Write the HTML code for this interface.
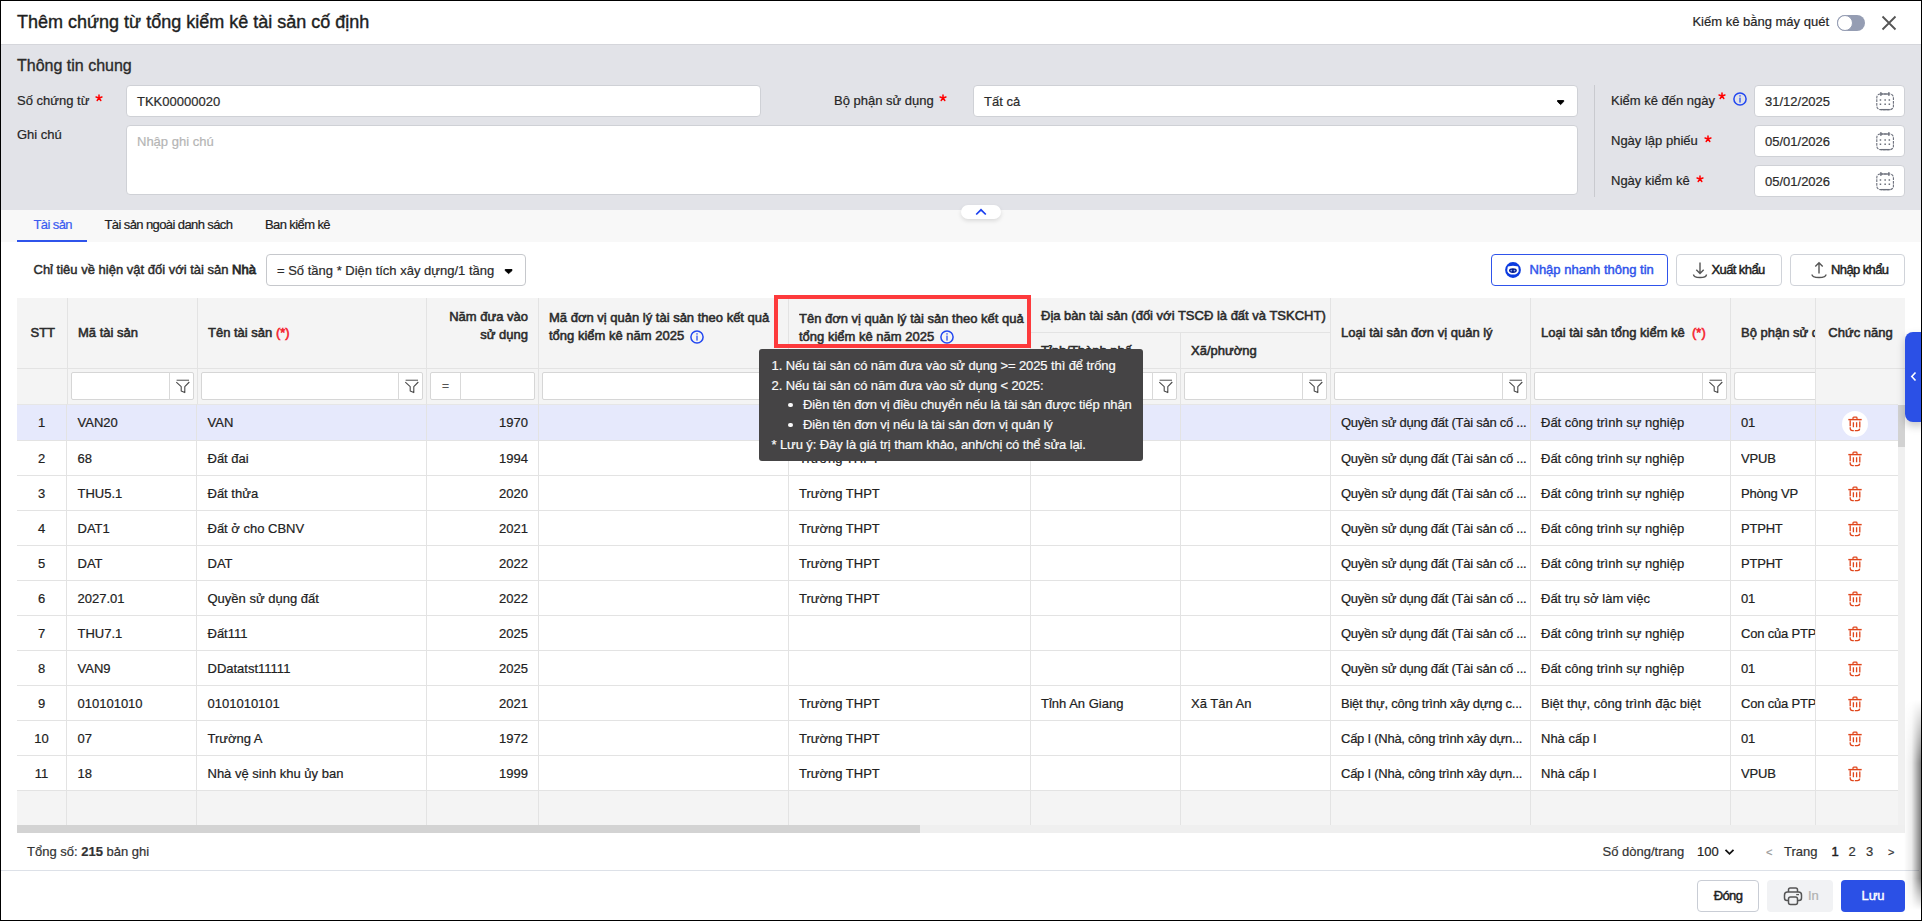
<!DOCTYPE html><html><head><meta charset="utf-8"><style>
html,body{margin:0;padding:0;}
body{width:1922px;height:921px;position:relative;overflow:hidden;background:#000;font-family:"Liberation Sans", sans-serif;}
</style></head><body>
<div style="position:absolute;left:1px;top:1px;width:1920px;height:919px;background:#fff"></div>
<div style="position:absolute;left:17px;top:11.46px;font-size:18px;line-height:22px;color:#1f1f1f;font-weight:400;white-space:nowrap;-webkit-text-stroke:0.4px #1f1f1f;">Thêm chứng từ tổng kiểm kê tài sản cố định</div>
<div style="position:absolute;right:93px;top:14.20px;font-size:13px;line-height:16px;color:#262626;font-weight:400;white-space:nowrap;-webkit-text-stroke:0.2px currentColor;">Kiếm kê bằng máy quét</div>
<div style="position:absolute;left:1837px;top:15px;width:28px;height:16px;background:#959db3;border-radius:8px"></div>
<div style="position:absolute;left:1837px;top:15px;width:16px;height:16px;background:#fff;border-radius:50%;box-sizing:border-box;border:1px solid #959db3"></div>
<svg style="position:absolute;left:1880px;top:14px" width="18" height="18" viewBox="0 0 18 18"><path d="M2.5 2.5 L15.5 15.5 M15.5 2.5 L2.5 15.5" stroke="#555" stroke-width="1.8" fill="none"/></svg>
<div style="position:absolute;left:1px;top:44px;width:1920px;height:1px;background:#d5d6db"></div>
<div style="position:absolute;left:1px;top:45px;width:1920px;height:165px;background:#e2e3e8"></div>
<div style="position:absolute;left:17px;top:56.16px;font-size:16px;line-height:20px;color:#2b2b2b;font-weight:400;white-space:nowrap;-webkit-text-stroke:0.35px #2b2b2b;">Thông tin chung</div>
<div style="position:absolute;left:17px;top:93.20px;font-size:13px;line-height:16px;color:#262626;font-weight:400;white-space:nowrap;-webkit-text-stroke:0.2px currentColor;">Số chứng từ</div>
<svg style="position:absolute;left:90.7px;top:90px" width="16" height="16" viewBox="0 0 16 16"><path d="M8 8 L8.00 4.90 M8 8 L10.95 7.04 M8 8 L9.82 10.51 M8 8 L6.18 10.51 M8 8 L5.05 7.04 " stroke="#ff0000" stroke-width="1.5" stroke-linecap="round" fill="none"/></svg>
<div style="position:absolute;left:126px;top:85px;width:635px;height:32px;background:#fff;box-sizing:border-box;border:1px solid #cfd1d6;border-radius:4px"></div>
<div style="position:absolute;left:137px;top:94.20px;font-size:13px;line-height:16px;color:#2b2b2b;font-weight:400;white-space:nowrap;-webkit-text-stroke:0.2px currentColor;">TKK00000020</div>
<div style="position:absolute;left:17px;top:127.20px;font-size:13px;line-height:16px;color:#262626;font-weight:400;white-space:nowrap;-webkit-text-stroke:0.2px currentColor;">Ghi chú</div>
<div style="position:absolute;left:126px;top:125px;width:1452px;height:70px;background:#fff;box-sizing:border-box;border:1px solid #cfd1d6;border-radius:4px"></div>
<div style="position:absolute;left:137px;top:134.20px;font-size:13px;line-height:16px;color:#b5b5b5;font-weight:400;white-space:nowrap;-webkit-text-stroke:0.2px currentColor;">Nhập ghi chú</div>
<div style="position:absolute;left:834px;top:93.20px;font-size:13px;line-height:16px;color:#262626;font-weight:400;white-space:nowrap;-webkit-text-stroke:0.2px currentColor;">Bộ phận sử dụng</div>
<svg style="position:absolute;left:935px;top:90px" width="16" height="16" viewBox="0 0 16 16"><path d="M8 8 L8.00 4.90 M8 8 L10.95 7.04 M8 8 L9.82 10.51 M8 8 L6.18 10.51 M8 8 L5.05 7.04 " stroke="#ff0000" stroke-width="1.5" stroke-linecap="round" fill="none"/></svg>
<div style="position:absolute;left:973px;top:85px;width:605px;height:32px;background:#fff;box-sizing:border-box;border:1px solid #cfd1d6;border-radius:4px"></div>
<div style="position:absolute;left:984px;top:94.20px;font-size:13px;line-height:16px;color:#2b2b2b;font-weight:400;white-space:nowrap;-webkit-text-stroke:0.2px currentColor;">Tất cả</div>
<svg style="position:absolute;left:1555px;top:99px" width="11" height="7" viewBox="0 0 11 7"><path d="M2.5 1.5 H8.7 V2.6 L5.6 5.6 L2.5 2.6 Z" fill="#000" stroke="#000" stroke-width="0.9" stroke-linejoin="round"/></svg>
<div style="position:absolute;left:1594px;top:85px;width:1px;height:112px;background:#c9cacf"></div>
<div style="position:absolute;left:1611px;top:93.20px;font-size:13px;line-height:16px;color:#262626;font-weight:400;white-space:nowrap;-webkit-text-stroke:0.2px currentColor;">Kiểm kê đến ngày</div>
<svg style="position:absolute;left:1713.5px;top:87.5px" width="16" height="16" viewBox="0 0 16 16"><path d="M8 8 L8.00 4.90 M8 8 L10.95 7.04 M8 8 L9.82 10.51 M8 8 L6.18 10.51 M8 8 L5.05 7.04 " stroke="#ff0000" stroke-width="1.5" stroke-linecap="round" fill="none"/></svg>
<svg style="position:absolute;left:1733px;top:92px" width="14" height="14" viewBox="0 0 14 14"><circle cx="7" cy="7" r="6.1" stroke="#2247f0" stroke-width="1.5" fill="none"/><rect x="6.3" y="5.6" width="1.4" height="5" fill="#3a5cf2"/><rect x="6.3" y="3.2" width="1.4" height="1.4" fill="#3a5cf2"/></svg>
<div style="position:absolute;left:1611px;top:133.20px;font-size:13px;line-height:16px;color:#262626;font-weight:400;white-space:nowrap;-webkit-text-stroke:0.2px currentColor;">Ngày lập phiếu</div>
<svg style="position:absolute;left:1700px;top:131px" width="16" height="16" viewBox="0 0 16 16"><path d="M8 8 L8.00 4.90 M8 8 L10.95 7.04 M8 8 L9.82 10.51 M8 8 L6.18 10.51 M8 8 L5.05 7.04 " stroke="#ff0000" stroke-width="1.5" stroke-linecap="round" fill="none"/></svg>
<div style="position:absolute;left:1611px;top:173.20px;font-size:13px;line-height:16px;color:#262626;font-weight:400;white-space:nowrap;-webkit-text-stroke:0.2px currentColor;">Ngày kiểm kê</div>
<svg style="position:absolute;left:1692px;top:171px" width="16" height="16" viewBox="0 0 16 16"><path d="M8 8 L8.00 4.90 M8 8 L10.95 7.04 M8 8 L9.82 10.51 M8 8 L6.18 10.51 M8 8 L5.05 7.04 " stroke="#ff0000" stroke-width="1.5" stroke-linecap="round" fill="none"/></svg>
<div style="position:absolute;left:1754px;top:85px;width:151px;height:32px;background:#fff;box-sizing:border-box;border:1px solid #cfd1d6;border-radius:4px"></div>
<div style="position:absolute;left:1765px;top:94.20px;font-size:13px;line-height:16px;color:#2b2b2b;font-weight:400;white-space:nowrap;-webkit-text-stroke:0.2px currentColor;">31/12/2025</div>
<svg style="position:absolute;left:1876px;top:91px" width="19" height="20" viewBox="0 0 19 20"><rect x="0.8" y="3" width="16.6" height="15.6" rx="3.4" stroke="#6b6f7b" stroke-width="1.1" fill="none" stroke-dasharray="2.8 0.9"/><path d="M4.9 1 V5 M12.9 1 V5" stroke="#6b6f7b" stroke-width="1.2"/><path d="M4.9 3 H12.9" stroke="#6b6f7b" stroke-width="1.2"/><path d="M3.7 9h1.5M8.4 9h1.5M12.6 9h1.5M3.7 13.2h1.5M8.4 13.2h1.5M12.6 13.2h1.5" stroke="#6b6f7b" stroke-width="1.4"/><path d="M5.2 18.6 H13.8" stroke="#6b6f7b" stroke-width="1.3"/></svg>
<div style="position:absolute;left:1754px;top:125px;width:151px;height:32px;background:#fff;box-sizing:border-box;border:1px solid #cfd1d6;border-radius:4px"></div>
<div style="position:absolute;left:1765px;top:134.20px;font-size:13px;line-height:16px;color:#2b2b2b;font-weight:400;white-space:nowrap;-webkit-text-stroke:0.2px currentColor;">05/01/2026</div>
<svg style="position:absolute;left:1876px;top:131px" width="19" height="20" viewBox="0 0 19 20"><rect x="0.8" y="3" width="16.6" height="15.6" rx="3.4" stroke="#6b6f7b" stroke-width="1.1" fill="none" stroke-dasharray="2.8 0.9"/><path d="M4.9 1 V5 M12.9 1 V5" stroke="#6b6f7b" stroke-width="1.2"/><path d="M4.9 3 H12.9" stroke="#6b6f7b" stroke-width="1.2"/><path d="M3.7 9h1.5M8.4 9h1.5M12.6 9h1.5M3.7 13.2h1.5M8.4 13.2h1.5M12.6 13.2h1.5" stroke="#6b6f7b" stroke-width="1.4"/><path d="M5.2 18.6 H13.8" stroke="#6b6f7b" stroke-width="1.3"/></svg>
<div style="position:absolute;left:1754px;top:165px;width:151px;height:32px;background:#fff;box-sizing:border-box;border:1px solid #cfd1d6;border-radius:4px"></div>
<div style="position:absolute;left:1765px;top:174.20px;font-size:13px;line-height:16px;color:#2b2b2b;font-weight:400;white-space:nowrap;-webkit-text-stroke:0.2px currentColor;">05/01/2026</div>
<svg style="position:absolute;left:1876px;top:171px" width="19" height="20" viewBox="0 0 19 20"><rect x="0.8" y="3" width="16.6" height="15.6" rx="3.4" stroke="#6b6f7b" stroke-width="1.1" fill="none" stroke-dasharray="2.8 0.9"/><path d="M4.9 1 V5 M12.9 1 V5" stroke="#6b6f7b" stroke-width="1.2"/><path d="M4.9 3 H12.9" stroke="#6b6f7b" stroke-width="1.2"/><path d="M3.7 9h1.5M8.4 9h1.5M12.6 9h1.5M3.7 13.2h1.5M8.4 13.2h1.5M12.6 13.2h1.5" stroke="#6b6f7b" stroke-width="1.4"/><path d="M5.2 18.6 H13.8" stroke="#6b6f7b" stroke-width="1.3"/></svg>
<div style="position:absolute;left:1px;top:210px;width:1920px;height:32px;background:#f8f8f8"></div>
<div style="position:absolute;left:33.5px;top:217.20px;font-size:13px;line-height:16px;color:#3a5cf0;font-weight:400;white-space:nowrap;-webkit-text-stroke:0.2px currentColor;letter-spacing:-0.6px;">Tài sản</div>
<div style="position:absolute;left:104.5px;top:217.20px;font-size:13px;line-height:16px;color:#212121;font-weight:400;white-space:nowrap;-webkit-text-stroke:0.2px currentColor;letter-spacing:-0.6px;">Tài sản ngoài danh sách</div>
<div style="position:absolute;left:265px;top:217.20px;font-size:13px;line-height:16px;color:#212121;font-weight:400;white-space:nowrap;-webkit-text-stroke:0.2px currentColor;letter-spacing:-0.6px;">Ban kiểm kê</div>
<div style="position:absolute;left:17px;top:240px;width:70px;height:2px;background:#2f54eb"></div>
<div style="position:absolute;left:961px;top:205px;width:40px;height:14px;background:#fff;border-radius:7px;box-shadow:0 2px 4px rgba(0,0,0,0.12)"></div>
<svg style="position:absolute;left:975px;top:208px" width="12" height="8" viewBox="0 0 12 8"><path d="M1.2 6.5 L6 1.8 L10.8 6.5" stroke="#1a3ff0" stroke-width="1.7" fill="none"/></svg>
<div style="position:absolute;left:33.5px;top:261.70px;font-size:13px;line-height:16px;color:#2b2b2b;font-weight:400;white-space:nowrap;-webkit-text-stroke:0.45px currentColor;">Chỉ tiêu về hiện vật đối với tài sản <span style="-webkit-text-stroke:0.8px #2b2b2b">Nhà</span></div>
<div style="position:absolute;left:266px;top:254px;width:260px;height:32px;background:#fff;box-sizing:border-box;border:1px solid #c6c8cc;border-radius:4px"></div>
<div style="position:absolute;left:277px;top:262.70px;font-size:13px;line-height:16px;color:#2b2b2b;font-weight:400;white-space:nowrap;-webkit-text-stroke:0.2px currentColor;">= Số tầng * Diện tích xây dựng/1 tầng</div>
<svg style="position:absolute;left:503px;top:268px" width="11" height="7" viewBox="0 0 11 7"><path d="M2.2 1.5 H9 V2.6 L5.6 5.6 L2.2 2.6 Z" fill="#000" stroke="#000" stroke-width="0.9" stroke-linejoin="round"/></svg>
<div style="position:absolute;left:1491px;top:254px;width:177px;height:32px;background:#fff;box-sizing:border-box;border:1.5px solid #2f54eb;border-radius:4px"></div>
<svg style="position:absolute;left:1504px;top:261px" width="18" height="18" viewBox="0 0 18 18"><circle cx="9" cy="9" r="7.9" fill="#0b3be0"/><path d="M3.6 7 Q3.2 5 5.2 5.2 Q9 4.5 12.8 5.2 Q14.8 5 14.4 7 Q15 9 14.6 10.5 Q13.5 13.6 9 13.6 Q4.5 13.6 3.4 10.5 Q3 9 3.6 7 Z" fill="#fff"/><ellipse cx="8.9" cy="9.6" rx="3.9" ry="2.4" fill="#001a8c"/><circle cx="7.3" cy="9.6" r="0.9" fill="#8ea2e6"/><circle cx="10.5" cy="9.6" r="0.9" fill="#8ea2e6"/></svg>
<div style="position:absolute;left:1529.5px;top:262.20px;font-size:13px;line-height:16px;color:#2f54eb;font-weight:400;white-space:nowrap;-webkit-text-stroke:0.45px currentColor;">Nhập nhanh thông tin</div>
<div style="position:absolute;left:1676px;top:254px;width:106px;height:32px;background:#fff;box-sizing:border-box;border:1px solid #d0d3d9;border-radius:4px"></div>
<svg style="position:absolute;left:1692px;top:261px" width="17" height="18" viewBox="0 0 17 18"><path d="M8 1.5 V12.5 M4.3 8.8 L8 12.5 L11.7 8.8" stroke="#555" stroke-width="1.4" fill="none"/><path d="M1.5 13.5 Q1.5 16.5 8 16.5 Q14.5 16.5 14.5 13.5" stroke="#555" stroke-width="1.4" fill="none"/></svg>
<div style="position:absolute;left:1711.5px;top:262.20px;font-size:13px;line-height:16px;color:#212121;font-weight:400;white-space:nowrap;-webkit-text-stroke:0.45px currentColor;letter-spacing:-0.6px;">Xuất khẩu</div>
<div style="position:absolute;left:1790px;top:254px;width:115px;height:32px;background:#fff;box-sizing:border-box;border:1px solid #d0d3d9;border-radius:4px"></div>
<svg style="position:absolute;left:1811px;top:261px" width="17" height="18" viewBox="0 0 17 18"><path d="M8 12.5 V1.8 M4.3 5.5 L8 1.8 L11.7 5.5" stroke="#555" stroke-width="1.4" fill="none"/><path d="M1 13.5 Q1 16.5 8 16.5 Q15 16.5 15 13.5" stroke="#555" stroke-width="1.4" fill="none"/></svg>
<div style="position:absolute;left:1831px;top:262.20px;font-size:13px;line-height:16px;color:#212121;font-weight:400;white-space:nowrap;-webkit-text-stroke:0.45px currentColor;letter-spacing:-0.6px;">Nhập khẩu</div>
<div style="position:absolute;left:17px;top:298px;width:1881px;height:527px;background:#f4f4f4"></div>
<div style="position:absolute;left:1898px;top:298px;width:7px;height:107px;background:#f4f4f4"></div>
<div style="position:absolute;left:17px;top:405px;width:1881px;height:35px;background:#e6e9fc"></div>
<div style="position:absolute;left:17px;top:440px;width:1881px;height:1px;background:#e3e3e3"></div>
<div style="position:absolute;left:17px;top:441px;width:1881px;height:34px;background:#fff"></div>
<div style="position:absolute;left:17px;top:475px;width:1881px;height:1px;background:#e3e3e3"></div>
<div style="position:absolute;left:17px;top:476px;width:1881px;height:34px;background:#fff"></div>
<div style="position:absolute;left:17px;top:510px;width:1881px;height:1px;background:#e3e3e3"></div>
<div style="position:absolute;left:17px;top:511px;width:1881px;height:34px;background:#fff"></div>
<div style="position:absolute;left:17px;top:545px;width:1881px;height:1px;background:#e3e3e3"></div>
<div style="position:absolute;left:17px;top:546px;width:1881px;height:34px;background:#fff"></div>
<div style="position:absolute;left:17px;top:580px;width:1881px;height:1px;background:#e3e3e3"></div>
<div style="position:absolute;left:17px;top:581px;width:1881px;height:34px;background:#fff"></div>
<div style="position:absolute;left:17px;top:615px;width:1881px;height:1px;background:#e3e3e3"></div>
<div style="position:absolute;left:17px;top:616px;width:1881px;height:34px;background:#fff"></div>
<div style="position:absolute;left:17px;top:650px;width:1881px;height:1px;background:#e3e3e3"></div>
<div style="position:absolute;left:17px;top:651px;width:1881px;height:34px;background:#fff"></div>
<div style="position:absolute;left:17px;top:685px;width:1881px;height:1px;background:#e3e3e3"></div>
<div style="position:absolute;left:17px;top:686px;width:1881px;height:34px;background:#fff"></div>
<div style="position:absolute;left:17px;top:720px;width:1881px;height:1px;background:#e3e3e3"></div>
<div style="position:absolute;left:17px;top:721px;width:1881px;height:34px;background:#fff"></div>
<div style="position:absolute;left:17px;top:755px;width:1881px;height:1px;background:#e3e3e3"></div>
<div style="position:absolute;left:17px;top:756px;width:1881px;height:34px;background:#fff"></div>
<div style="position:absolute;left:17px;top:790px;width:1881px;height:1px;background:#e3e3e3"></div>
<div style="position:absolute;left:17px;top:368px;width:1888px;height:1px;background:#e3e3e3"></div>
<div style="position:absolute;left:17px;top:404px;width:1881px;height:1px;background:#e6e6e6"></div>
<div style="position:absolute;left:1030px;top:332px;width:300px;height:1px;background:#e3e3e3"></div>
<div style="position:absolute;left:67px;top:298px;width:1px;height:106px;background:#e3e3e3"></div>
<div style="position:absolute;left:66px;top:404px;width:1px;height:421px;background:#e3e3e3"></div>
<div style="position:absolute;left:197px;top:298px;width:1px;height:106px;background:#e3e3e3"></div>
<div style="position:absolute;left:196px;top:404px;width:1px;height:421px;background:#e3e3e3"></div>
<div style="position:absolute;left:426px;top:298px;width:1px;height:527px;background:#e3e3e3"></div>
<div style="position:absolute;left:538px;top:298px;width:1px;height:527px;background:#e3e3e3"></div>
<div style="position:absolute;left:788px;top:298px;width:1px;height:527px;background:#e3e3e3"></div>
<div style="position:absolute;left:1030px;top:298px;width:1px;height:527px;background:#e3e3e3"></div>
<div style="position:absolute;left:1180px;top:333px;width:1px;height:492px;background:#e3e3e3"></div>
<div style="position:absolute;left:1330px;top:298px;width:1px;height:527px;background:#e3e3e3"></div>
<div style="position:absolute;left:1530px;top:298px;width:1px;height:527px;background:#e3e3e3"></div>
<div style="position:absolute;left:1730px;top:298px;width:1px;height:527px;background:#e3e3e3"></div>
<div style="position:absolute;left:1815px;top:298px;width:1px;height:527px;background:#e3e3e3"></div>
<div style="position:absolute;left:1898px;top:405px;width:7px;height:420px;background:#f0f0f0"></div>
<div style="position:absolute;left:1898px;top:405px;width:7px;height:42px;background:#d2d2d2"></div>
<div style="position:absolute;left:17px;top:825px;width:1888px;height:8px;background:#efefef"></div>
<div style="position:absolute;left:17px;top:825px;width:903px;height:8px;background:#d3d3d3"></div>
<div style="position:absolute;left:30.5px;top:325.20px;font-size:13px;line-height:16px;color:#2b2b2b;font-weight:400;white-space:nowrap;-webkit-text-stroke:0.55px currentColor;">STT</div>
<div style="position:absolute;left:78px;top:325.20px;font-size:13px;line-height:16px;color:#2b2b2b;font-weight:400;white-space:nowrap;-webkit-text-stroke:0.55px currentColor;">Mã tài sản</div>
<div style="position:absolute;left:208px;top:325.20px;font-size:13px;line-height:16px;color:#2b2b2b;font-weight:400;white-space:nowrap;-webkit-text-stroke:0.55px currentColor;">Tên tài sản <span style="color:#f5222d">(*)</span></div>
<div style="position:absolute;right:1394px;top:309.20px;font-size:13px;line-height:16px;color:#2b2b2b;font-weight:400;white-space:nowrap;-webkit-text-stroke:0.55px currentColor;">Năm đưa vào</div>
<div style="position:absolute;right:1394px;top:327.20px;font-size:13px;line-height:16px;color:#2b2b2b;font-weight:400;white-space:nowrap;-webkit-text-stroke:0.55px currentColor;">sử dụng</div>
<div style="position:absolute;left:549px;width:236px;overflow:hidden;top:310.20px;font-size:13px;line-height:16px;color:#2b2b2b;font-weight:400;white-space:nowrap;-webkit-text-stroke:0.55px currentColor;">Mã đơn vị quản lý tài sản theo kết quả</div>
<div style="position:absolute;left:549px;top:328.20px;font-size:13px;line-height:16px;color:#2b2b2b;font-weight:400;white-space:nowrap;-webkit-text-stroke:0.55px currentColor;">tổng kiểm kê năm 2025</div>
<svg style="position:absolute;left:690px;top:330px" width="14" height="14" viewBox="0 0 14 14"><circle cx="7" cy="7" r="6.1" stroke="#2247f0" stroke-width="1.5" fill="none"/><rect x="6.3" y="5.6" width="1.4" height="5" fill="#3a5cf2"/><rect x="6.3" y="3.2" width="1.4" height="1.4" fill="#3a5cf2"/></svg>
<div style="position:absolute;left:799px;width:228px;overflow:hidden;top:310.70px;font-size:13px;line-height:16px;color:#2b2b2b;font-weight:400;white-space:nowrap;-webkit-text-stroke:0.55px currentColor;">Tên đơn vị quản lý tài sản theo kết quả</div>
<div style="position:absolute;left:799px;top:328.70px;font-size:13px;line-height:16px;color:#2b2b2b;font-weight:400;white-space:nowrap;-webkit-text-stroke:0.55px currentColor;">tổng kiểm kê năm 2025</div>
<svg style="position:absolute;left:940px;top:330px" width="14" height="14" viewBox="0 0 14 14"><circle cx="7" cy="7" r="6.1" stroke="#2247f0" stroke-width="1.5" fill="none"/><rect x="6.3" y="5.6" width="1.4" height="5" fill="#3a5cf2"/><rect x="6.3" y="3.2" width="1.4" height="1.4" fill="#3a5cf2"/></svg>
<div style="position:absolute;left:1041px;top:307.70px;font-size:13px;line-height:16px;color:#2b2b2b;font-weight:400;white-space:nowrap;-webkit-text-stroke:0.55px currentColor;">Địa bàn tài sản (đối với TSCĐ là đất và TSKCHT)</div>
<div style="position:absolute;left:1041px;top:343.20px;font-size:13px;line-height:16px;color:#2b2b2b;font-weight:400;white-space:nowrap;-webkit-text-stroke:0.55px currentColor;">Tỉnh/Thành phố</div>
<div style="position:absolute;left:1191px;top:343.20px;font-size:13px;line-height:16px;color:#2b2b2b;font-weight:400;white-space:nowrap;-webkit-text-stroke:0.55px currentColor;">Xã/phường</div>
<div style="position:absolute;left:1341px;top:325.20px;font-size:13px;line-height:16px;color:#2b2b2b;font-weight:400;white-space:nowrap;-webkit-text-stroke:0.55px currentColor;">Loại tài sản đơn vị quản lý</div>
<div style="position:absolute;left:1541px;top:325.20px;font-size:13px;line-height:16px;color:#2b2b2b;font-weight:400;white-space:nowrap;-webkit-text-stroke:0.55px currentColor;">Loại tài sản tổng kiểm kê <span style="color:#f5222d">&nbsp;(*)</span></div>
<div style="position:absolute;left:1741px;width:74px;overflow:hidden;top:325.20px;font-size:13px;line-height:16px;color:#2b2b2b;font-weight:400;white-space:nowrap;-webkit-text-stroke:0.55px currentColor;">Bộ phận sử dụng</div>
<div style="position:absolute;left:1660.5px;width:400px;text-align:center;top:325.20px;font-size:13px;line-height:16px;color:#2b2b2b;font-weight:400;white-space:nowrap;-webkit-text-stroke:0.55px currentColor;">Chức năng</div>
<div style="position:absolute;left:71px;top:372px;width:123px;height:28px;background:#fff;box-sizing:border-box;border:1px solid #d6d6d6;border-radius:2px"></div>
<div style="position:absolute;left:169px;top:372px;width:1px;height:28px;background:#d9d9d9"></div>
<svg style="position:absolute;left:173.5px;top:378px" width="18" height="17" viewBox="0 0 18 17"><path d="M2.6 2.3 H15" stroke="#808080" stroke-width="1.4"/><path d="M2.3 4.2 L7.2 8.6 V13 L10.8 14.6 V8.6 L15.3 4" stroke="#4a4a4a" stroke-width="1.1" fill="none" stroke-linejoin="round"/></svg>
<div style="position:absolute;left:201px;top:372px;width:222px;height:28px;background:#fff;box-sizing:border-box;border:1px solid #d6d6d6;border-radius:2px"></div>
<div style="position:absolute;left:398px;top:372px;width:1px;height:28px;background:#d9d9d9"></div>
<svg style="position:absolute;left:402.5px;top:378px" width="18" height="17" viewBox="0 0 18 17"><path d="M2.6 2.3 H15" stroke="#808080" stroke-width="1.4"/><path d="M2.3 4.2 L7.2 8.6 V13 L10.8 14.6 V8.6 L15.3 4" stroke="#4a4a4a" stroke-width="1.1" fill="none" stroke-linejoin="round"/></svg>
<div style="position:absolute;left:430px;top:372px;width:105px;height:28px;background:#fff;box-sizing:border-box;border:1px solid #d6d6d6;border-radius:2px"></div>
<div style="position:absolute;left:460px;top:372px;width:1px;height:28px;background:#d9d9d9"></div>
<div style="position:absolute;left:245.5px;width:400px;text-align:center;top:379.04px;font-size:12px;line-height:15px;color:#555;font-weight:400;white-space:nowrap;-webkit-text-stroke:0.2px currentColor;">=</div>
<div style="position:absolute;left:542px;top:372px;width:243px;height:28px;background:#fff;box-sizing:border-box;border:1px solid #d6d6d6;border-radius:2px"></div>
<div style="position:absolute;left:760px;top:372px;width:1px;height:28px;background:#d9d9d9"></div>
<svg style="position:absolute;left:764.5px;top:378px" width="18" height="17" viewBox="0 0 18 17"><path d="M2.6 2.3 H15" stroke="#808080" stroke-width="1.4"/><path d="M2.3 4.2 L7.2 8.6 V13 L10.8 14.6 V8.6 L15.3 4" stroke="#4a4a4a" stroke-width="1.1" fill="none" stroke-linejoin="round"/></svg>
<div style="position:absolute;left:792px;top:372px;width:235px;height:28px;background:#fff;box-sizing:border-box;border:1px solid #d6d6d6;border-radius:2px"></div>
<div style="position:absolute;left:1002px;top:372px;width:1px;height:28px;background:#d9d9d9"></div>
<svg style="position:absolute;left:1006.5px;top:378px" width="18" height="17" viewBox="0 0 18 17"><path d="M2.6 2.3 H15" stroke="#808080" stroke-width="1.4"/><path d="M2.3 4.2 L7.2 8.6 V13 L10.8 14.6 V8.6 L15.3 4" stroke="#4a4a4a" stroke-width="1.1" fill="none" stroke-linejoin="round"/></svg>
<div style="position:absolute;left:1034px;top:372px;width:143px;height:28px;background:#fff;box-sizing:border-box;border:1px solid #d6d6d6;border-radius:2px"></div>
<div style="position:absolute;left:1152px;top:372px;width:1px;height:28px;background:#d9d9d9"></div>
<svg style="position:absolute;left:1156.5px;top:378px" width="18" height="17" viewBox="0 0 18 17"><path d="M2.6 2.3 H15" stroke="#808080" stroke-width="1.4"/><path d="M2.3 4.2 L7.2 8.6 V13 L10.8 14.6 V8.6 L15.3 4" stroke="#4a4a4a" stroke-width="1.1" fill="none" stroke-linejoin="round"/></svg>
<div style="position:absolute;left:1184px;top:372px;width:143px;height:28px;background:#fff;box-sizing:border-box;border:1px solid #d6d6d6;border-radius:2px"></div>
<div style="position:absolute;left:1302px;top:372px;width:1px;height:28px;background:#d9d9d9"></div>
<svg style="position:absolute;left:1306.5px;top:378px" width="18" height="17" viewBox="0 0 18 17"><path d="M2.6 2.3 H15" stroke="#808080" stroke-width="1.4"/><path d="M2.3 4.2 L7.2 8.6 V13 L10.8 14.6 V8.6 L15.3 4" stroke="#4a4a4a" stroke-width="1.1" fill="none" stroke-linejoin="round"/></svg>
<div style="position:absolute;left:1334px;top:372px;width:193px;height:28px;background:#fff;box-sizing:border-box;border:1px solid #d6d6d6;border-radius:2px"></div>
<div style="position:absolute;left:1502px;top:372px;width:1px;height:28px;background:#d9d9d9"></div>
<svg style="position:absolute;left:1506.5px;top:378px" width="18" height="17" viewBox="0 0 18 17"><path d="M2.6 2.3 H15" stroke="#808080" stroke-width="1.4"/><path d="M2.3 4.2 L7.2 8.6 V13 L10.8 14.6 V8.6 L15.3 4" stroke="#4a4a4a" stroke-width="1.1" fill="none" stroke-linejoin="round"/></svg>
<div style="position:absolute;left:1534px;top:372px;width:193px;height:28px;background:#fff;box-sizing:border-box;border:1px solid #d6d6d6;border-radius:2px"></div>
<div style="position:absolute;left:1702px;top:372px;width:1px;height:28px;background:#d9d9d9"></div>
<svg style="position:absolute;left:1706.5px;top:378px" width="18" height="17" viewBox="0 0 18 17"><path d="M2.6 2.3 H15" stroke="#808080" stroke-width="1.4"/><path d="M2.3 4.2 L7.2 8.6 V13 L10.8 14.6 V8.6 L15.3 4" stroke="#4a4a4a" stroke-width="1.1" fill="none" stroke-linejoin="round"/></svg>
<div style="position:absolute;left:1734px;top:372px;width:81px;height:28px;background:#fff;border:1px solid #d9d9d9;border-right:none;border-radius:3px 0 0 3px;box-sizing:border-box"></div>
<div style="position:absolute;left:-158.5px;width:400px;text-align:center;top:415.00px;font-size:13px;line-height:16px;color:#212121;font-weight:400;white-space:nowrap;-webkit-text-stroke:0.2px currentColor;">1</div>
<div style="position:absolute;left:77.5px;top:415.00px;font-size:13px;line-height:16px;color:#212121;font-weight:400;white-space:nowrap;-webkit-text-stroke:0.2px currentColor;">VAN20</div>
<div style="position:absolute;left:207.5px;top:415.00px;font-size:13px;line-height:16px;color:#212121;font-weight:400;white-space:nowrap;-webkit-text-stroke:0.2px currentColor;">VAN</div>
<div style="position:absolute;right:1394px;top:415.00px;font-size:13px;line-height:16px;color:#212121;font-weight:400;white-space:nowrap;-webkit-text-stroke:0.2px currentColor;">1970</div>
<div style="position:absolute;left:1341px;width:188px;overflow:hidden;top:415.00px;font-size:13px;line-height:16px;color:#212121;font-weight:400;white-space:nowrap;-webkit-text-stroke:0.2px currentColor;letter-spacing:-0.25px;">Quyền sử dụng đất (Tài sản cố ...</div>
<div style="position:absolute;left:1541px;top:415.00px;font-size:13px;line-height:16px;color:#212121;font-weight:400;white-space:nowrap;-webkit-text-stroke:0.2px currentColor;">Đất công trình sự nghiệp</div>
<div style="position:absolute;left:1741px;width:74px;overflow:hidden;top:415.00px;font-size:13px;line-height:16px;color:#212121;font-weight:400;white-space:nowrap;-webkit-text-stroke:0.2px currentColor;letter-spacing:-0.2px;">01</div>
<div style="position:absolute;left:1842px;top:410.79999999999995px;width:26px;height:26.0px;background:#fff;border-radius:50%"></div>
<svg style="position:absolute;left:1847px;top:414.79999999999995px" width="16" height="18" viewBox="0 0 16 18"><path d="M1.3 4.6 H14.7" stroke="#e0451b" stroke-width="1.4"/><path d="M6 3.9 V2.9 Q6 2.1 6.8 2.1 H9.2 Q10 2.1 10 2.9 V3.9" stroke="#e0451b" stroke-width="1.2" fill="none"/><path d="M3.2 5.2 V13.2 Q3.2 15.6 5.6 15.6 H10.4 Q12.8 15.6 12.8 13.2 V5.2" stroke="#e0451b" stroke-width="1.3" fill="none" stroke-dasharray="6 1"/><path d="M6.4 7.2 V12.2 M9.6 7.2 V12.2" stroke="#e0451b" stroke-width="1.3"/></svg>
<div style="position:absolute;left:-158.5px;width:400px;text-align:center;top:451.00px;font-size:13px;line-height:16px;color:#212121;font-weight:400;white-space:nowrap;-webkit-text-stroke:0.2px currentColor;">2</div>
<div style="position:absolute;left:77.5px;top:451.00px;font-size:13px;line-height:16px;color:#212121;font-weight:400;white-space:nowrap;-webkit-text-stroke:0.2px currentColor;">68</div>
<div style="position:absolute;left:207.5px;top:451.00px;font-size:13px;line-height:16px;color:#212121;font-weight:400;white-space:nowrap;-webkit-text-stroke:0.2px currentColor;">Đất đai</div>
<div style="position:absolute;right:1394px;top:451.00px;font-size:13px;line-height:16px;color:#212121;font-weight:400;white-space:nowrap;-webkit-text-stroke:0.2px currentColor;">1994</div>
<div style="position:absolute;left:799px;top:451.00px;font-size:13px;line-height:16px;color:#212121;font-weight:400;white-space:nowrap;-webkit-text-stroke:0.2px currentColor;">Trường THPT</div>
<div style="position:absolute;left:1341px;width:188px;overflow:hidden;top:451.00px;font-size:13px;line-height:16px;color:#212121;font-weight:400;white-space:nowrap;-webkit-text-stroke:0.2px currentColor;letter-spacing:-0.25px;">Quyền sử dụng đất (Tài sản cố ...</div>
<div style="position:absolute;left:1541px;top:451.00px;font-size:13px;line-height:16px;color:#212121;font-weight:400;white-space:nowrap;-webkit-text-stroke:0.2px currentColor;">Đất công trình sự nghiệp</div>
<div style="position:absolute;left:1741px;width:74px;overflow:hidden;top:451.00px;font-size:13px;line-height:16px;color:#212121;font-weight:400;white-space:nowrap;-webkit-text-stroke:0.2px currentColor;letter-spacing:-0.2px;">VPUB</div>
<svg style="position:absolute;left:1847px;top:450.4px" width="16" height="18" viewBox="0 0 16 18"><path d="M1.3 4.6 H14.7" stroke="#e0451b" stroke-width="1.4"/><path d="M6 3.9 V2.9 Q6 2.1 6.8 2.1 H9.2 Q10 2.1 10 2.9 V3.9" stroke="#e0451b" stroke-width="1.2" fill="none"/><path d="M3.2 5.2 V13.2 Q3.2 15.6 5.6 15.6 H10.4 Q12.8 15.6 12.8 13.2 V5.2" stroke="#e0451b" stroke-width="1.3" fill="none" stroke-dasharray="6 1"/><path d="M6.4 7.2 V12.2 M9.6 7.2 V12.2" stroke="#e0451b" stroke-width="1.3"/></svg>
<div style="position:absolute;left:-158.5px;width:400px;text-align:center;top:486.00px;font-size:13px;line-height:16px;color:#212121;font-weight:400;white-space:nowrap;-webkit-text-stroke:0.2px currentColor;">3</div>
<div style="position:absolute;left:77.5px;top:486.00px;font-size:13px;line-height:16px;color:#212121;font-weight:400;white-space:nowrap;-webkit-text-stroke:0.2px currentColor;">THU5.1</div>
<div style="position:absolute;left:207.5px;top:486.00px;font-size:13px;line-height:16px;color:#212121;font-weight:400;white-space:nowrap;-webkit-text-stroke:0.2px currentColor;">Đất thửa</div>
<div style="position:absolute;right:1394px;top:486.00px;font-size:13px;line-height:16px;color:#212121;font-weight:400;white-space:nowrap;-webkit-text-stroke:0.2px currentColor;">2020</div>
<div style="position:absolute;left:799px;top:486.00px;font-size:13px;line-height:16px;color:#212121;font-weight:400;white-space:nowrap;-webkit-text-stroke:0.2px currentColor;">Trường THPT</div>
<div style="position:absolute;left:1341px;width:188px;overflow:hidden;top:486.00px;font-size:13px;line-height:16px;color:#212121;font-weight:400;white-space:nowrap;-webkit-text-stroke:0.2px currentColor;letter-spacing:-0.25px;">Quyền sử dụng đất (Tài sản cố ...</div>
<div style="position:absolute;left:1541px;top:486.00px;font-size:13px;line-height:16px;color:#212121;font-weight:400;white-space:nowrap;-webkit-text-stroke:0.2px currentColor;">Đất công trình sự nghiệp</div>
<div style="position:absolute;left:1741px;width:74px;overflow:hidden;top:486.00px;font-size:13px;line-height:16px;color:#212121;font-weight:400;white-space:nowrap;-webkit-text-stroke:0.2px currentColor;letter-spacing:-0.2px;">Phòng VP</div>
<svg style="position:absolute;left:1847px;top:485.4px" width="16" height="18" viewBox="0 0 16 18"><path d="M1.3 4.6 H14.7" stroke="#e0451b" stroke-width="1.4"/><path d="M6 3.9 V2.9 Q6 2.1 6.8 2.1 H9.2 Q10 2.1 10 2.9 V3.9" stroke="#e0451b" stroke-width="1.2" fill="none"/><path d="M3.2 5.2 V13.2 Q3.2 15.6 5.6 15.6 H10.4 Q12.8 15.6 12.8 13.2 V5.2" stroke="#e0451b" stroke-width="1.3" fill="none" stroke-dasharray="6 1"/><path d="M6.4 7.2 V12.2 M9.6 7.2 V12.2" stroke="#e0451b" stroke-width="1.3"/></svg>
<div style="position:absolute;left:-158.5px;width:400px;text-align:center;top:521.00px;font-size:13px;line-height:16px;color:#212121;font-weight:400;white-space:nowrap;-webkit-text-stroke:0.2px currentColor;">4</div>
<div style="position:absolute;left:77.5px;top:521.00px;font-size:13px;line-height:16px;color:#212121;font-weight:400;white-space:nowrap;-webkit-text-stroke:0.2px currentColor;">DAT1</div>
<div style="position:absolute;left:207.5px;top:521.00px;font-size:13px;line-height:16px;color:#212121;font-weight:400;white-space:nowrap;-webkit-text-stroke:0.2px currentColor;">Đất ở cho CBNV</div>
<div style="position:absolute;right:1394px;top:521.00px;font-size:13px;line-height:16px;color:#212121;font-weight:400;white-space:nowrap;-webkit-text-stroke:0.2px currentColor;">2021</div>
<div style="position:absolute;left:799px;top:521.00px;font-size:13px;line-height:16px;color:#212121;font-weight:400;white-space:nowrap;-webkit-text-stroke:0.2px currentColor;">Trường THPT</div>
<div style="position:absolute;left:1341px;width:188px;overflow:hidden;top:521.00px;font-size:13px;line-height:16px;color:#212121;font-weight:400;white-space:nowrap;-webkit-text-stroke:0.2px currentColor;letter-spacing:-0.25px;">Quyền sử dụng đất (Tài sản cố ...</div>
<div style="position:absolute;left:1541px;top:521.00px;font-size:13px;line-height:16px;color:#212121;font-weight:400;white-space:nowrap;-webkit-text-stroke:0.2px currentColor;">Đất công trình sự nghiệp</div>
<div style="position:absolute;left:1741px;width:74px;overflow:hidden;top:521.00px;font-size:13px;line-height:16px;color:#212121;font-weight:400;white-space:nowrap;-webkit-text-stroke:0.2px currentColor;letter-spacing:-0.2px;">PTPHT</div>
<svg style="position:absolute;left:1847px;top:520.4px" width="16" height="18" viewBox="0 0 16 18"><path d="M1.3 4.6 H14.7" stroke="#e0451b" stroke-width="1.4"/><path d="M6 3.9 V2.9 Q6 2.1 6.8 2.1 H9.2 Q10 2.1 10 2.9 V3.9" stroke="#e0451b" stroke-width="1.2" fill="none"/><path d="M3.2 5.2 V13.2 Q3.2 15.6 5.6 15.6 H10.4 Q12.8 15.6 12.8 13.2 V5.2" stroke="#e0451b" stroke-width="1.3" fill="none" stroke-dasharray="6 1"/><path d="M6.4 7.2 V12.2 M9.6 7.2 V12.2" stroke="#e0451b" stroke-width="1.3"/></svg>
<div style="position:absolute;left:-158.5px;width:400px;text-align:center;top:556.00px;font-size:13px;line-height:16px;color:#212121;font-weight:400;white-space:nowrap;-webkit-text-stroke:0.2px currentColor;">5</div>
<div style="position:absolute;left:77.5px;top:556.00px;font-size:13px;line-height:16px;color:#212121;font-weight:400;white-space:nowrap;-webkit-text-stroke:0.2px currentColor;">DAT</div>
<div style="position:absolute;left:207.5px;top:556.00px;font-size:13px;line-height:16px;color:#212121;font-weight:400;white-space:nowrap;-webkit-text-stroke:0.2px currentColor;">DAT</div>
<div style="position:absolute;right:1394px;top:556.00px;font-size:13px;line-height:16px;color:#212121;font-weight:400;white-space:nowrap;-webkit-text-stroke:0.2px currentColor;">2022</div>
<div style="position:absolute;left:799px;top:556.00px;font-size:13px;line-height:16px;color:#212121;font-weight:400;white-space:nowrap;-webkit-text-stroke:0.2px currentColor;">Trường THPT</div>
<div style="position:absolute;left:1341px;width:188px;overflow:hidden;top:556.00px;font-size:13px;line-height:16px;color:#212121;font-weight:400;white-space:nowrap;-webkit-text-stroke:0.2px currentColor;letter-spacing:-0.25px;">Quyền sử dụng đất (Tài sản cố ...</div>
<div style="position:absolute;left:1541px;top:556.00px;font-size:13px;line-height:16px;color:#212121;font-weight:400;white-space:nowrap;-webkit-text-stroke:0.2px currentColor;">Đất công trình sự nghiệp</div>
<div style="position:absolute;left:1741px;width:74px;overflow:hidden;top:556.00px;font-size:13px;line-height:16px;color:#212121;font-weight:400;white-space:nowrap;-webkit-text-stroke:0.2px currentColor;letter-spacing:-0.2px;">PTPHT</div>
<svg style="position:absolute;left:1847px;top:555.4px" width="16" height="18" viewBox="0 0 16 18"><path d="M1.3 4.6 H14.7" stroke="#e0451b" stroke-width="1.4"/><path d="M6 3.9 V2.9 Q6 2.1 6.8 2.1 H9.2 Q10 2.1 10 2.9 V3.9" stroke="#e0451b" stroke-width="1.2" fill="none"/><path d="M3.2 5.2 V13.2 Q3.2 15.6 5.6 15.6 H10.4 Q12.8 15.6 12.8 13.2 V5.2" stroke="#e0451b" stroke-width="1.3" fill="none" stroke-dasharray="6 1"/><path d="M6.4 7.2 V12.2 M9.6 7.2 V12.2" stroke="#e0451b" stroke-width="1.3"/></svg>
<div style="position:absolute;left:-158.5px;width:400px;text-align:center;top:591.00px;font-size:13px;line-height:16px;color:#212121;font-weight:400;white-space:nowrap;-webkit-text-stroke:0.2px currentColor;">6</div>
<div style="position:absolute;left:77.5px;top:591.00px;font-size:13px;line-height:16px;color:#212121;font-weight:400;white-space:nowrap;-webkit-text-stroke:0.2px currentColor;">2027.01</div>
<div style="position:absolute;left:207.5px;top:591.00px;font-size:13px;line-height:16px;color:#212121;font-weight:400;white-space:nowrap;-webkit-text-stroke:0.2px currentColor;">Quyền sử dụng đất</div>
<div style="position:absolute;right:1394px;top:591.00px;font-size:13px;line-height:16px;color:#212121;font-weight:400;white-space:nowrap;-webkit-text-stroke:0.2px currentColor;">2022</div>
<div style="position:absolute;left:799px;top:591.00px;font-size:13px;line-height:16px;color:#212121;font-weight:400;white-space:nowrap;-webkit-text-stroke:0.2px currentColor;">Trường THPT</div>
<div style="position:absolute;left:1341px;width:188px;overflow:hidden;top:591.00px;font-size:13px;line-height:16px;color:#212121;font-weight:400;white-space:nowrap;-webkit-text-stroke:0.2px currentColor;letter-spacing:-0.25px;">Quyền sử dụng đất (Tài sản cố ...</div>
<div style="position:absolute;left:1541px;top:591.00px;font-size:13px;line-height:16px;color:#212121;font-weight:400;white-space:nowrap;-webkit-text-stroke:0.2px currentColor;">Đất trụ sở làm việc</div>
<div style="position:absolute;left:1741px;width:74px;overflow:hidden;top:591.00px;font-size:13px;line-height:16px;color:#212121;font-weight:400;white-space:nowrap;-webkit-text-stroke:0.2px currentColor;letter-spacing:-0.2px;">01</div>
<svg style="position:absolute;left:1847px;top:590.4px" width="16" height="18" viewBox="0 0 16 18"><path d="M1.3 4.6 H14.7" stroke="#e0451b" stroke-width="1.4"/><path d="M6 3.9 V2.9 Q6 2.1 6.8 2.1 H9.2 Q10 2.1 10 2.9 V3.9" stroke="#e0451b" stroke-width="1.2" fill="none"/><path d="M3.2 5.2 V13.2 Q3.2 15.6 5.6 15.6 H10.4 Q12.8 15.6 12.8 13.2 V5.2" stroke="#e0451b" stroke-width="1.3" fill="none" stroke-dasharray="6 1"/><path d="M6.4 7.2 V12.2 M9.6 7.2 V12.2" stroke="#e0451b" stroke-width="1.3"/></svg>
<div style="position:absolute;left:-158.5px;width:400px;text-align:center;top:626.00px;font-size:13px;line-height:16px;color:#212121;font-weight:400;white-space:nowrap;-webkit-text-stroke:0.2px currentColor;">7</div>
<div style="position:absolute;left:77.5px;top:626.00px;font-size:13px;line-height:16px;color:#212121;font-weight:400;white-space:nowrap;-webkit-text-stroke:0.2px currentColor;">THU7.1</div>
<div style="position:absolute;left:207.5px;top:626.00px;font-size:13px;line-height:16px;color:#212121;font-weight:400;white-space:nowrap;-webkit-text-stroke:0.2px currentColor;">Đất111</div>
<div style="position:absolute;right:1394px;top:626.00px;font-size:13px;line-height:16px;color:#212121;font-weight:400;white-space:nowrap;-webkit-text-stroke:0.2px currentColor;">2025</div>
<div style="position:absolute;left:1341px;width:188px;overflow:hidden;top:626.00px;font-size:13px;line-height:16px;color:#212121;font-weight:400;white-space:nowrap;-webkit-text-stroke:0.2px currentColor;letter-spacing:-0.25px;">Quyền sử dụng đất (Tài sản cố ...</div>
<div style="position:absolute;left:1541px;top:626.00px;font-size:13px;line-height:16px;color:#212121;font-weight:400;white-space:nowrap;-webkit-text-stroke:0.2px currentColor;">Đất công trình sự nghiệp</div>
<div style="position:absolute;left:1741px;width:74px;overflow:hidden;top:626.00px;font-size:13px;line-height:16px;color:#212121;font-weight:400;white-space:nowrap;-webkit-text-stroke:0.2px currentColor;letter-spacing:-0.2px;">Con của PTPHT</div>
<svg style="position:absolute;left:1847px;top:625.4px" width="16" height="18" viewBox="0 0 16 18"><path d="M1.3 4.6 H14.7" stroke="#e0451b" stroke-width="1.4"/><path d="M6 3.9 V2.9 Q6 2.1 6.8 2.1 H9.2 Q10 2.1 10 2.9 V3.9" stroke="#e0451b" stroke-width="1.2" fill="none"/><path d="M3.2 5.2 V13.2 Q3.2 15.6 5.6 15.6 H10.4 Q12.8 15.6 12.8 13.2 V5.2" stroke="#e0451b" stroke-width="1.3" fill="none" stroke-dasharray="6 1"/><path d="M6.4 7.2 V12.2 M9.6 7.2 V12.2" stroke="#e0451b" stroke-width="1.3"/></svg>
<div style="position:absolute;left:-158.5px;width:400px;text-align:center;top:661.00px;font-size:13px;line-height:16px;color:#212121;font-weight:400;white-space:nowrap;-webkit-text-stroke:0.2px currentColor;">8</div>
<div style="position:absolute;left:77.5px;top:661.00px;font-size:13px;line-height:16px;color:#212121;font-weight:400;white-space:nowrap;-webkit-text-stroke:0.2px currentColor;">VAN9</div>
<div style="position:absolute;left:207.5px;top:661.00px;font-size:13px;line-height:16px;color:#212121;font-weight:400;white-space:nowrap;-webkit-text-stroke:0.2px currentColor;">DDatatst11111</div>
<div style="position:absolute;right:1394px;top:661.00px;font-size:13px;line-height:16px;color:#212121;font-weight:400;white-space:nowrap;-webkit-text-stroke:0.2px currentColor;">2025</div>
<div style="position:absolute;left:1341px;width:188px;overflow:hidden;top:661.00px;font-size:13px;line-height:16px;color:#212121;font-weight:400;white-space:nowrap;-webkit-text-stroke:0.2px currentColor;letter-spacing:-0.25px;">Quyền sử dụng đất (Tài sản cố ...</div>
<div style="position:absolute;left:1541px;top:661.00px;font-size:13px;line-height:16px;color:#212121;font-weight:400;white-space:nowrap;-webkit-text-stroke:0.2px currentColor;">Đất công trình sự nghiệp</div>
<div style="position:absolute;left:1741px;width:74px;overflow:hidden;top:661.00px;font-size:13px;line-height:16px;color:#212121;font-weight:400;white-space:nowrap;-webkit-text-stroke:0.2px currentColor;letter-spacing:-0.2px;">01</div>
<svg style="position:absolute;left:1847px;top:660.4px" width="16" height="18" viewBox="0 0 16 18"><path d="M1.3 4.6 H14.7" stroke="#e0451b" stroke-width="1.4"/><path d="M6 3.9 V2.9 Q6 2.1 6.8 2.1 H9.2 Q10 2.1 10 2.9 V3.9" stroke="#e0451b" stroke-width="1.2" fill="none"/><path d="M3.2 5.2 V13.2 Q3.2 15.6 5.6 15.6 H10.4 Q12.8 15.6 12.8 13.2 V5.2" stroke="#e0451b" stroke-width="1.3" fill="none" stroke-dasharray="6 1"/><path d="M6.4 7.2 V12.2 M9.6 7.2 V12.2" stroke="#e0451b" stroke-width="1.3"/></svg>
<div style="position:absolute;left:-158.5px;width:400px;text-align:center;top:696.00px;font-size:13px;line-height:16px;color:#212121;font-weight:400;white-space:nowrap;-webkit-text-stroke:0.2px currentColor;">9</div>
<div style="position:absolute;left:77.5px;top:696.00px;font-size:13px;line-height:16px;color:#212121;font-weight:400;white-space:nowrap;-webkit-text-stroke:0.2px currentColor;">010101010</div>
<div style="position:absolute;left:207.5px;top:696.00px;font-size:13px;line-height:16px;color:#212121;font-weight:400;white-space:nowrap;-webkit-text-stroke:0.2px currentColor;">0101010101</div>
<div style="position:absolute;right:1394px;top:696.00px;font-size:13px;line-height:16px;color:#212121;font-weight:400;white-space:nowrap;-webkit-text-stroke:0.2px currentColor;">2021</div>
<div style="position:absolute;left:799px;top:696.00px;font-size:13px;line-height:16px;color:#212121;font-weight:400;white-space:nowrap;-webkit-text-stroke:0.2px currentColor;">Trường THPT</div>
<div style="position:absolute;left:1041px;top:696.00px;font-size:13px;line-height:16px;color:#212121;font-weight:400;white-space:nowrap;-webkit-text-stroke:0.2px currentColor;">Tỉnh An Giang</div>
<div style="position:absolute;left:1191px;top:696.00px;font-size:13px;line-height:16px;color:#212121;font-weight:400;white-space:nowrap;-webkit-text-stroke:0.2px currentColor;">Xã Tân An</div>
<div style="position:absolute;left:1341px;width:188px;overflow:hidden;top:696.00px;font-size:13px;line-height:16px;color:#212121;font-weight:400;white-space:nowrap;-webkit-text-stroke:0.2px currentColor;letter-spacing:-0.25px;">Biệt thự, công trình xây dựng c...</div>
<div style="position:absolute;left:1541px;top:696.00px;font-size:13px;line-height:16px;color:#212121;font-weight:400;white-space:nowrap;-webkit-text-stroke:0.2px currentColor;">Biệt thự, công trình đặc biệt</div>
<div style="position:absolute;left:1741px;width:74px;overflow:hidden;top:696.00px;font-size:13px;line-height:16px;color:#212121;font-weight:400;white-space:nowrap;-webkit-text-stroke:0.2px currentColor;letter-spacing:-0.2px;">Con của PTPHT</div>
<svg style="position:absolute;left:1847px;top:695.4px" width="16" height="18" viewBox="0 0 16 18"><path d="M1.3 4.6 H14.7" stroke="#e0451b" stroke-width="1.4"/><path d="M6 3.9 V2.9 Q6 2.1 6.8 2.1 H9.2 Q10 2.1 10 2.9 V3.9" stroke="#e0451b" stroke-width="1.2" fill="none"/><path d="M3.2 5.2 V13.2 Q3.2 15.6 5.6 15.6 H10.4 Q12.8 15.6 12.8 13.2 V5.2" stroke="#e0451b" stroke-width="1.3" fill="none" stroke-dasharray="6 1"/><path d="M6.4 7.2 V12.2 M9.6 7.2 V12.2" stroke="#e0451b" stroke-width="1.3"/></svg>
<div style="position:absolute;left:-158.5px;width:400px;text-align:center;top:731.00px;font-size:13px;line-height:16px;color:#212121;font-weight:400;white-space:nowrap;-webkit-text-stroke:0.2px currentColor;">10</div>
<div style="position:absolute;left:77.5px;top:731.00px;font-size:13px;line-height:16px;color:#212121;font-weight:400;white-space:nowrap;-webkit-text-stroke:0.2px currentColor;">07</div>
<div style="position:absolute;left:207.5px;top:731.00px;font-size:13px;line-height:16px;color:#212121;font-weight:400;white-space:nowrap;-webkit-text-stroke:0.2px currentColor;">Trường A</div>
<div style="position:absolute;right:1394px;top:731.00px;font-size:13px;line-height:16px;color:#212121;font-weight:400;white-space:nowrap;-webkit-text-stroke:0.2px currentColor;">1972</div>
<div style="position:absolute;left:799px;top:731.00px;font-size:13px;line-height:16px;color:#212121;font-weight:400;white-space:nowrap;-webkit-text-stroke:0.2px currentColor;">Trường THPT</div>
<div style="position:absolute;left:1341px;width:188px;overflow:hidden;top:731.00px;font-size:13px;line-height:16px;color:#212121;font-weight:400;white-space:nowrap;-webkit-text-stroke:0.2px currentColor;letter-spacing:-0.25px;">Cấp I (Nhà, công trình xây dựn...</div>
<div style="position:absolute;left:1541px;top:731.00px;font-size:13px;line-height:16px;color:#212121;font-weight:400;white-space:nowrap;-webkit-text-stroke:0.2px currentColor;">Nhà cấp I</div>
<div style="position:absolute;left:1741px;width:74px;overflow:hidden;top:731.00px;font-size:13px;line-height:16px;color:#212121;font-weight:400;white-space:nowrap;-webkit-text-stroke:0.2px currentColor;letter-spacing:-0.2px;">01</div>
<svg style="position:absolute;left:1847px;top:730.4px" width="16" height="18" viewBox="0 0 16 18"><path d="M1.3 4.6 H14.7" stroke="#e0451b" stroke-width="1.4"/><path d="M6 3.9 V2.9 Q6 2.1 6.8 2.1 H9.2 Q10 2.1 10 2.9 V3.9" stroke="#e0451b" stroke-width="1.2" fill="none"/><path d="M3.2 5.2 V13.2 Q3.2 15.6 5.6 15.6 H10.4 Q12.8 15.6 12.8 13.2 V5.2" stroke="#e0451b" stroke-width="1.3" fill="none" stroke-dasharray="6 1"/><path d="M6.4 7.2 V12.2 M9.6 7.2 V12.2" stroke="#e0451b" stroke-width="1.3"/></svg>
<div style="position:absolute;left:-158.5px;width:400px;text-align:center;top:766.00px;font-size:13px;line-height:16px;color:#212121;font-weight:400;white-space:nowrap;-webkit-text-stroke:0.2px currentColor;">11</div>
<div style="position:absolute;left:77.5px;top:766.00px;font-size:13px;line-height:16px;color:#212121;font-weight:400;white-space:nowrap;-webkit-text-stroke:0.2px currentColor;">18</div>
<div style="position:absolute;left:207.5px;top:766.00px;font-size:13px;line-height:16px;color:#212121;font-weight:400;white-space:nowrap;-webkit-text-stroke:0.2px currentColor;">Nhà vệ sinh khu ủy ban</div>
<div style="position:absolute;right:1394px;top:766.00px;font-size:13px;line-height:16px;color:#212121;font-weight:400;white-space:nowrap;-webkit-text-stroke:0.2px currentColor;">1999</div>
<div style="position:absolute;left:799px;top:766.00px;font-size:13px;line-height:16px;color:#212121;font-weight:400;white-space:nowrap;-webkit-text-stroke:0.2px currentColor;">Trường THPT</div>
<div style="position:absolute;left:1341px;width:188px;overflow:hidden;top:766.00px;font-size:13px;line-height:16px;color:#212121;font-weight:400;white-space:nowrap;-webkit-text-stroke:0.2px currentColor;letter-spacing:-0.25px;">Cấp I (Nhà, công trình xây dựn...</div>
<div style="position:absolute;left:1541px;top:766.00px;font-size:13px;line-height:16px;color:#212121;font-weight:400;white-space:nowrap;-webkit-text-stroke:0.2px currentColor;">Nhà cấp I</div>
<div style="position:absolute;left:1741px;width:74px;overflow:hidden;top:766.00px;font-size:13px;line-height:16px;color:#212121;font-weight:400;white-space:nowrap;-webkit-text-stroke:0.2px currentColor;letter-spacing:-0.2px;">VPUB</div>
<svg style="position:absolute;left:1847px;top:765.4px" width="16" height="18" viewBox="0 0 16 18"><path d="M1.3 4.6 H14.7" stroke="#e0451b" stroke-width="1.4"/><path d="M6 3.9 V2.9 Q6 2.1 6.8 2.1 H9.2 Q10 2.1 10 2.9 V3.9" stroke="#e0451b" stroke-width="1.2" fill="none"/><path d="M3.2 5.2 V13.2 Q3.2 15.6 5.6 15.6 H10.4 Q12.8 15.6 12.8 13.2 V5.2" stroke="#e0451b" stroke-width="1.3" fill="none" stroke-dasharray="6 1"/><path d="M6.4 7.2 V12.2 M9.6 7.2 V12.2" stroke="#e0451b" stroke-width="1.3"/></svg>
<div style="position:absolute;left:774px;top:295px;width:257px;height:53px;box-sizing:border-box;border:4px solid #fd3a3c"></div>
<div style="position:absolute;left:759px;top:349px;width:384px;height:112px;background:#454445;border-radius:3px"></div>
<div style="position:absolute;left:771.5px;top:358.20px;font-size:13px;line-height:16px;color:#fafafa;font-weight:400;white-space:nowrap;-webkit-text-stroke:0.2px #fafafa;letter-spacing:-0.1px;">1. Nếu tài sản có năm đưa vào sử dụng &gt;= 2025 thì để trống</div>
<div style="position:absolute;left:771.5px;top:377.70px;font-size:13px;line-height:16px;color:#fafafa;font-weight:400;white-space:nowrap;-webkit-text-stroke:0.2px #fafafa;letter-spacing:-0.1px;">2. Nếu tài sản có năm đưa vào sử dụng &lt; 2025:</div>
<div style="position:absolute;left:788px;top:402.8px;width:4.5px;height:4.5px;background:#fafafa;border-radius:50%"></div>
<div style="position:absolute;left:803px;top:397.20px;font-size:13px;line-height:16px;color:#fafafa;font-weight:400;white-space:nowrap;-webkit-text-stroke:0.2px #fafafa;letter-spacing:-0.1px;">Điền tên đơn vị điều chuyển nếu là tài sản được tiếp nhận</div>
<div style="position:absolute;left:788px;top:422.5px;width:4.5px;height:4.5px;background:#fafafa;border-radius:50%"></div>
<div style="position:absolute;left:803px;top:417.20px;font-size:13px;line-height:16px;color:#fafafa;font-weight:400;white-space:nowrap;-webkit-text-stroke:0.2px #fafafa;letter-spacing:-0.1px;">Điền tên đơn vị nếu là tài sản đơn vị quản lý</div>
<div style="position:absolute;left:771.5px;top:436.70px;font-size:13px;line-height:16px;color:#fafafa;font-weight:400;white-space:nowrap;-webkit-text-stroke:0.2px #fafafa;letter-spacing:-0.1px;">* Lưu ý: Đây là giá trị tham khảo, anh/chị có thể sửa lại.</div>
<div style="position:absolute;left:1905px;top:332px;width:20px;height:90px;background:#2b50e6;border-radius:8px 0 0 8px;box-shadow:0 4px 9px rgba(0,0,0,0.22)"></div>
<svg style="position:absolute;left:1909px;top:371px" width="9" height="11" viewBox="0 0 9 11"><path d="M6.5 1.5 L2.8 5.5 L6.5 9.5" stroke="#fff" stroke-width="1.6" fill="none"/></svg>
<div style="position:absolute;left:27px;top:844.20px;font-size:13px;line-height:16px;color:#333;font-weight:400;white-space:nowrap;-webkit-text-stroke:0.2px currentColor;">Tổng số: <b>215</b> bản ghi</div>
<div style="position:absolute;left:1602.5px;top:844.20px;font-size:13px;line-height:16px;color:#333;font-weight:400;white-space:nowrap;-webkit-text-stroke:0.2px currentColor;">Số dòng/trang</div>
<div style="position:absolute;left:1697px;top:844.20px;font-size:13px;line-height:16px;color:#212121;font-weight:400;white-space:nowrap;-webkit-text-stroke:0.2px currentColor;">100</div>
<svg style="position:absolute;left:1724px;top:847.5px" width="11" height="8" viewBox="0 0 11 8"><path d="M1.5 1.8 L5.5 5.8 L9.5 1.8" stroke="#111" stroke-width="1.8" fill="none"/></svg>
<div style="position:absolute;left:1766px;top:845.39px;font-size:11px;line-height:14px;color:#9a9a9a;font-weight:400;white-space:nowrap;-webkit-text-stroke:0.2px currentColor;">&lt;</div>
<div style="position:absolute;left:1784px;top:844.20px;font-size:13px;line-height:16px;color:#333;font-weight:400;white-space:nowrap;-webkit-text-stroke:0.2px currentColor;">Trang</div>
<div style="position:absolute;left:1831.5px;top:844.20px;font-size:13px;line-height:16px;color:#212121;font-weight:400;white-space:nowrap;-webkit-text-stroke:0.45px currentColor;">1</div>
<div style="position:absolute;left:1848.5px;top:844.20px;font-size:13px;line-height:16px;color:#333;font-weight:400;white-space:nowrap;-webkit-text-stroke:0.2px currentColor;">2</div>
<div style="position:absolute;left:1866px;top:844.20px;font-size:13px;line-height:16px;color:#333;font-weight:400;white-space:nowrap;-webkit-text-stroke:0.2px currentColor;">3</div>
<div style="position:absolute;left:1888px;top:845.39px;font-size:11px;line-height:14px;color:#333;font-weight:400;white-space:nowrap;-webkit-text-stroke:0.2px currentColor;">&gt;</div>
<div style="position:absolute;left:1px;top:870px;width:1918px;height:1px;background:#dde1e8"></div>
<div style="position:absolute;left:1697px;top:880px;width:62px;height:32px;background:#fff;box-sizing:border-box;border:1px solid #c9cdd5;border-radius:4px"></div>
<div style="position:absolute;left:1528px;width:400px;text-align:center;top:888.20px;font-size:13px;line-height:16px;color:#222;font-weight:400;white-space:nowrap;-webkit-text-stroke:0.45px currentColor;letter-spacing:-0.6px;">Đóng</div>
<div style="position:absolute;left:1767px;top:880px;width:66px;height:32px;background:#f1f2f4;border-radius:4px"></div>
<svg style="position:absolute;left:1783px;top:886px" width="20" height="20" viewBox="0 0 20 20"><path d="M5.5 6 V3.8 Q5.5 2 7.3 2 H12.7 Q14.5 2 14.5 3.8 V6" stroke="#555" stroke-width="1.5" fill="none"/><path d="M5.5 14.5 H4 Q1.5 14.5 1.5 12 V9 Q1.5 6 4.5 6 H15.5 Q18.5 6 18.5 9 V12 Q18.5 14.5 16 14.5 H14.5" stroke="#555" stroke-width="1.5" fill="none"/><rect x="5.5" y="11" width="9" height="7.5" rx="2" stroke="#555" stroke-width="1.5" fill="none"/><path d="M13.2 8.6 H16" stroke="#555" stroke-width="1.3"/></svg>
<div style="position:absolute;left:1808px;top:888.20px;font-size:13px;line-height:16px;color:#b0b0b0;font-weight:400;white-space:nowrap;-webkit-text-stroke:0.2px currentColor;">In</div>
<div style="position:absolute;left:1841px;top:880px;width:64px;height:32px;background:#2b50e6;border-radius:4px"></div>
<div style="position:absolute;left:1673px;width:400px;text-align:center;top:888.20px;font-size:13px;line-height:16px;color:#fff;font-weight:400;white-space:nowrap;-webkit-text-stroke:0.4px #fff;">Lưu</div>
<div style="position:absolute;left:1904px;top:700px;width:17px;height:210px;background:linear-gradient(to right, rgba(0,0,0,0) 0%, rgba(0,0,0,0.08) 45%, rgba(0,0,0,0.5) 100%);-webkit-mask-image:linear-gradient(to bottom, transparent 0%, #000 30%, #000 85%, transparent 100%)"></div>
<div style="position:absolute;left:1921px;top:0px;width:1px;height:921px;background:#000"></div>
<div style="position:absolute;left:0px;top:920px;width:1922px;height:1px;background:#000"></div>
</body></html>
